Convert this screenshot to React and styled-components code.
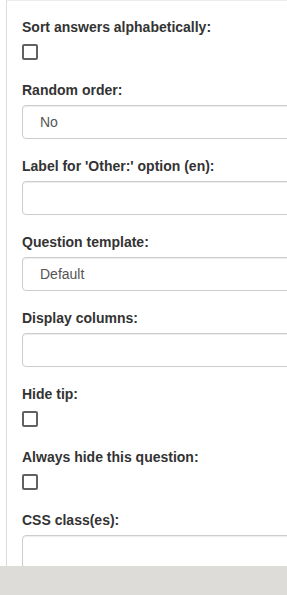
import React from "react";
import styled, { createGlobalStyle } from "styled-components";

const Global = createGlobalStyle`
  html, body { margin: 0; padding: 0; background: #fff; overflow: hidden; }
  body { font-family: "Liberation Sans", Arial, sans-serif; font-size: 14px; color: #333; }
  * { box-sizing: border-box; }
`;

const Page = styled.div`
  display: flex;
  flex-direction: column;
  height: 595px;
  width: 287px;
  overflow: hidden;
`;

const Main = styled.div`
  flex: 1;
  overflow: hidden;
  padding-left: 6px;
`;

const Panel = styled.div`
  width: 340px;
  min-height: 100%;
  border-left: 1px solid #dcdcdc;
  border-top: 1px solid #ececec;
  padding: 16px 0 0 15px;
`;

const Group = styled.div`
  margin-bottom: ${(p) => (p.$check ? "20px" : "17px")};
`;

const Label = styled.label`
  display: block;
  font-weight: bold;
  font-size: 14px;
  line-height: 20px;
  color: #333;
  margin-bottom: ${(p) => (p.$check ? "7px" : "5px")};
`;

const Check = styled.span`
  display: block;
  width: 16px;
  height: 16px;
  border: 2px solid #616161;
  border-radius: 2px;
  background: #fff;
`;

const Field = styled.div`
  height: 34px;
  width: 100%;
  border: 1px solid #ccc;
  border-radius: 4px;
  background: #fff;
  box-shadow: inset 0 1px 1px rgba(0, 0, 0, 0.075);
  padding-left: 17px;
  display: flex;
  align-items: center;
  font-size: 14px;
  color: #555;
`;

const Footer = styled.div`
  height: 29px;
  flex: none;
  background: #dddcd8;
`;

const items = [
  { label: "Sort answers alphabetically:", type: "check" },
  { label: "Random order:", type: "select", value: "No" },
  { label: "Label for 'Other:' option (en):", type: "input" },
  { label: "Question template:", type: "select", value: "Default" },
  { label: "Display columns:", type: "input" },
  { label: "Hide tip:", type: "check" },
  { label: "Always hide this question:", type: "check" },
  { label: "CSS class(es):", type: "input" },
];

export default function App() {
  return (
    <>
      <Global />
      <Page>
        <Main>
          <Panel>
            {items.map((it, i) => (
              <Group key={i} $check={it.type === "check"}>
                <Label $check={it.type === "check"}>{it.label}</Label>
                {it.type === "check" ? (
                  <Check />
                ) : (
                  <Field>{it.value || ""}</Field>
                )}
              </Group>
            ))}
          </Panel>
        </Main>
        <Footer />
      </Page>
    </>
  );
}
